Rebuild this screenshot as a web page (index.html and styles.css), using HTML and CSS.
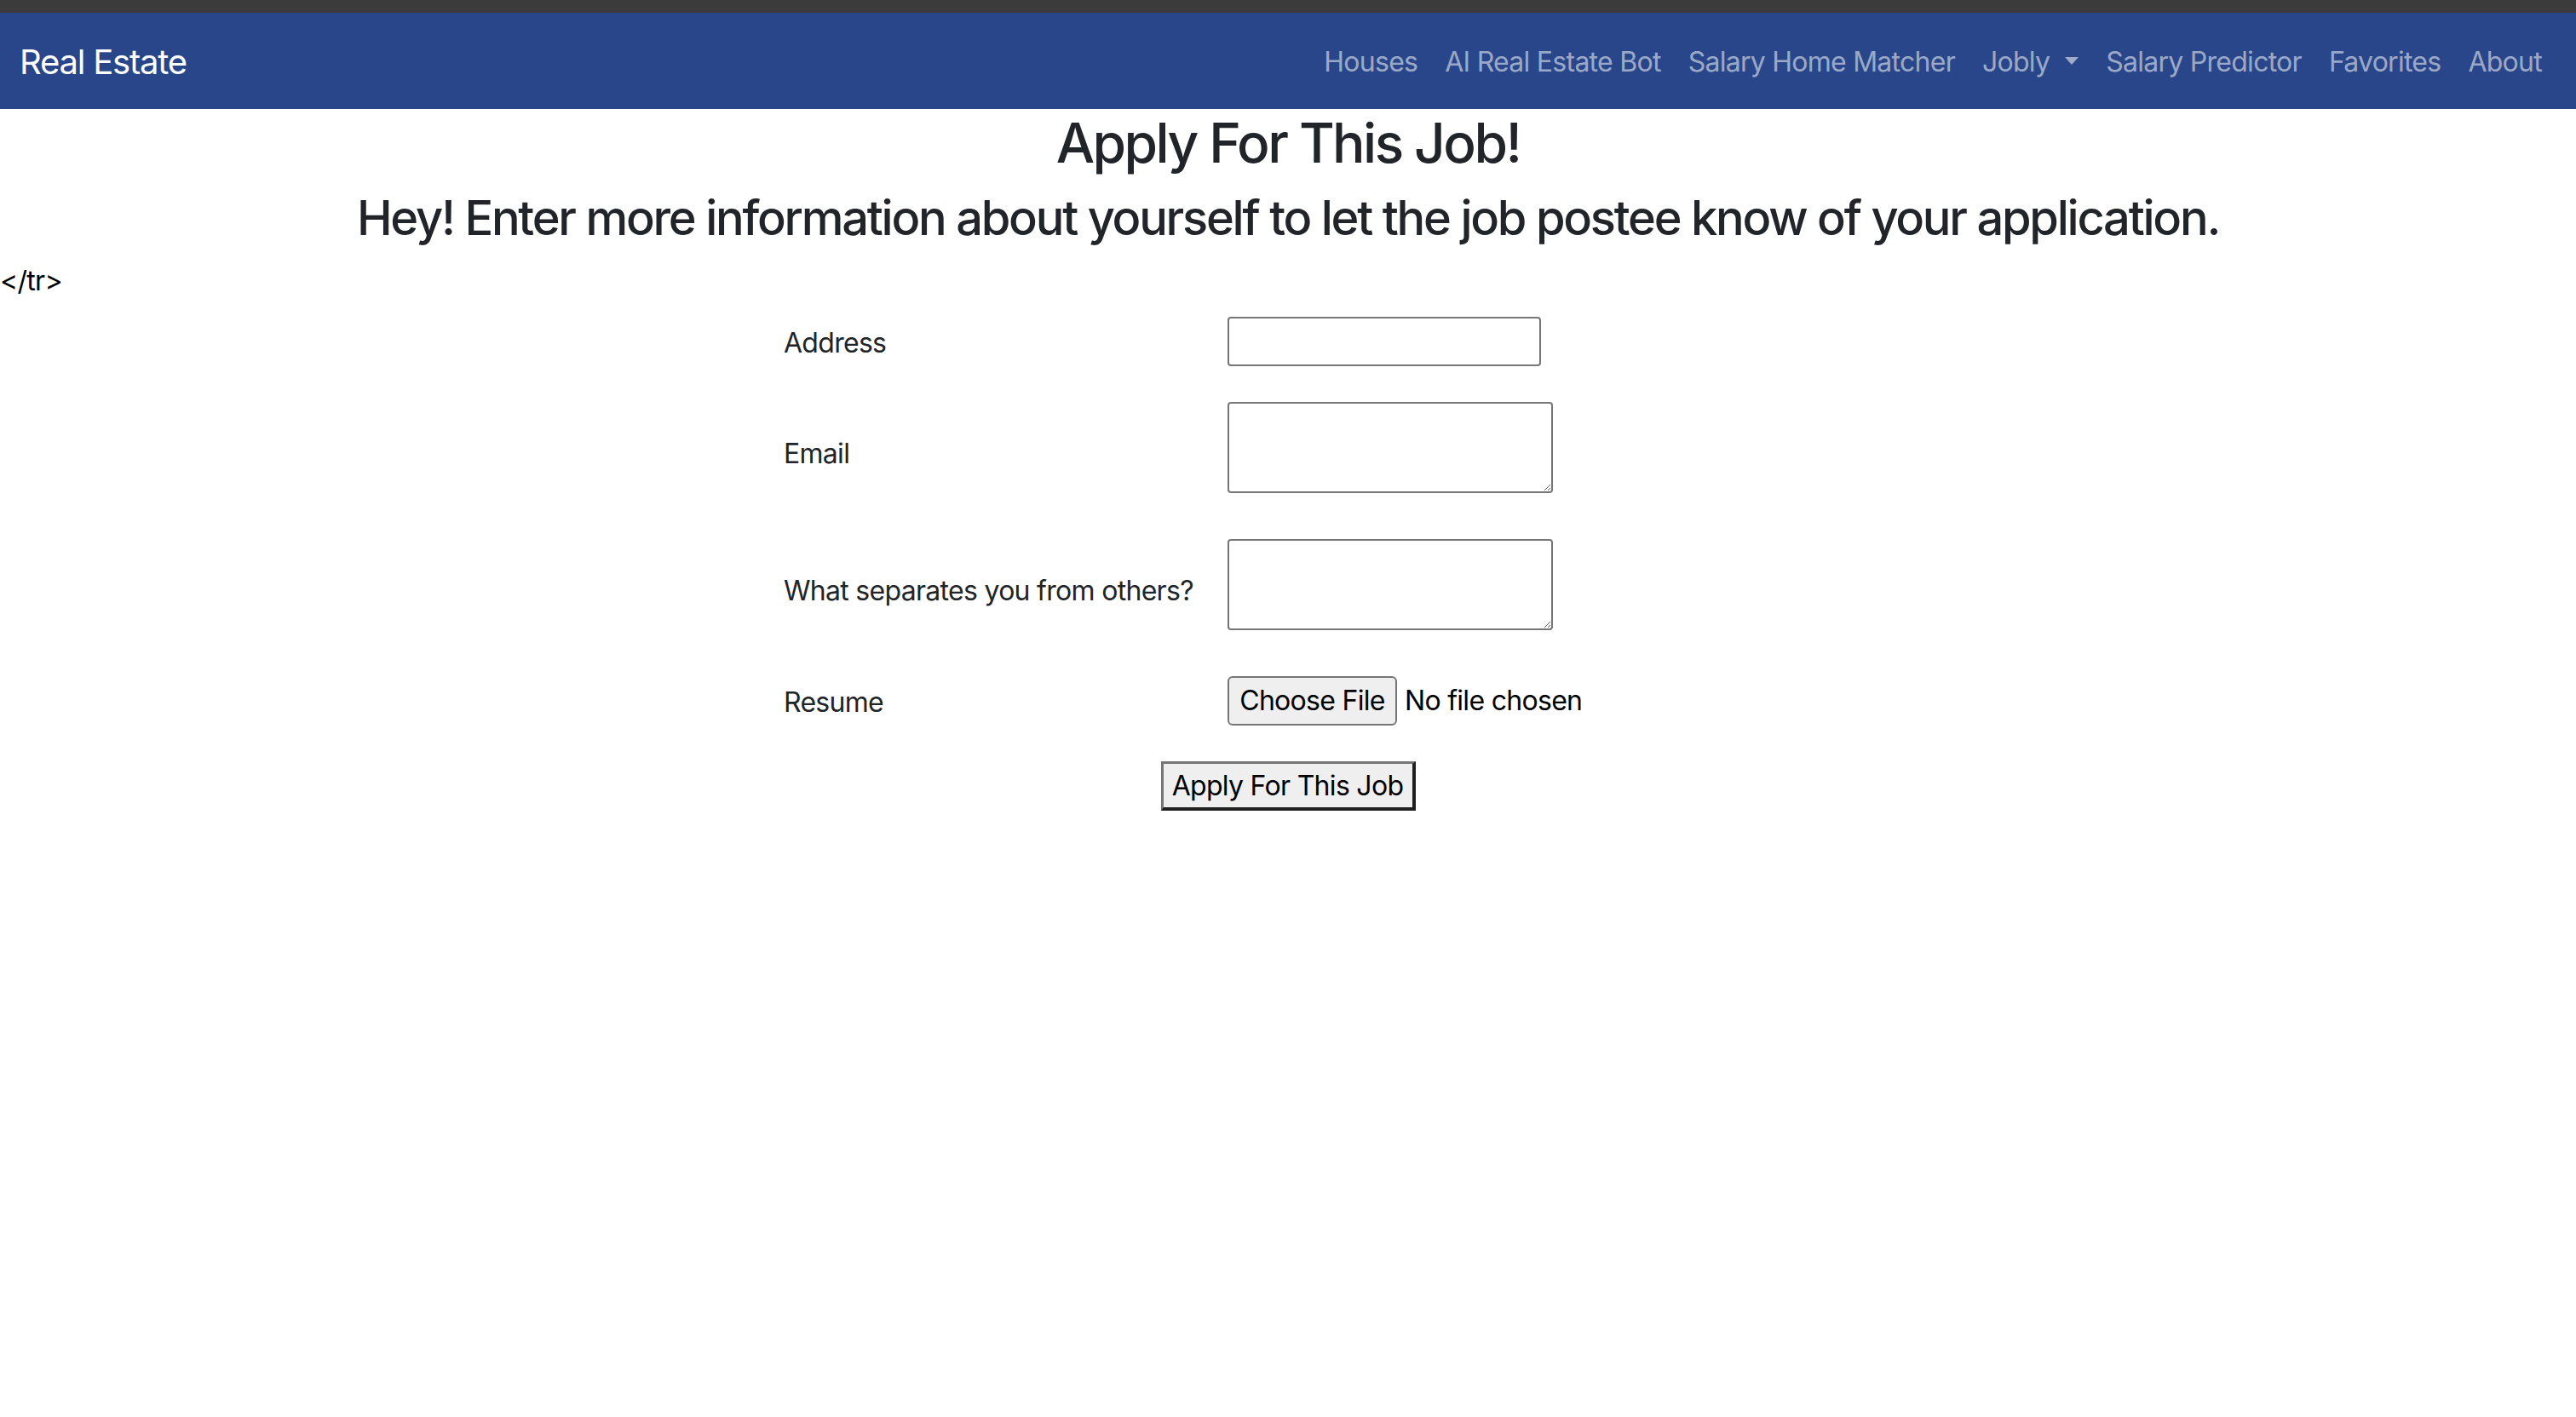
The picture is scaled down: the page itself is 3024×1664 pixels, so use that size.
FILE: index.html
```html
<!DOCTYPE html>
<html lang="en">
<head>
<meta charset="utf-8">
<title>Apply For This Job</title>
<link rel="stylesheet" href="styles.css">
</head>
<body>
<div class="topband"></div>
<nav class="navbar">
  <a class="brand" href="#">Real Estate</a>
  <ul class="nav">
    <li><a class="nav-link" href="#">Houses</a></li>
    <li><a class="nav-link" href="#">AI Real Estate Bot</a></li>
    <li><a class="nav-link" href="#">Salary Home Matcher</a></li>
    <li><a class="nav-link dropdown" href="#">Jobly</a></li>
    <li><a class="nav-link" href="#">Salary Predictor</a></li>
    <li><a class="nav-link" href="#">Favorites</a></li>
    <li><a class="nav-link" href="#">About</a></li>
  </ul>
</nav>
<h2 class="title">Apply For This Job!</h2>
<h3 class="subtitle">Hey! Enter more information about yourself to let the job postee know of your application.</h3>
<div class="stray">&lt;/tr&gt;</div>
<form class="apply-form">
  <div class="grid">
    <label class="label" for="address">Address</label>
    <div class="cell"><input id="address" class="text-input" type="text"></div>
    <label class="label" for="email">Email</label>
    <div class="cell tall"><textarea id="email" class="area"></textarea></div>
    <label class="label" for="sep">What separates you from others?</label>
    <div class="cell tall"><textarea id="sep" class="area"></textarea></div>
    <label class="label" for="resume">Resume</label>
    <div class="cell file-cell"><span class="file-btn">Choose File</span><span class="file-text">No file chosen</span></div>
  </div>
  <div class="submit-row"><button type="button" class="submit">Apply For This Job</button></div>
</form>
</body>
</html>
```
FILE: styles.css
```css
html, body {
  margin: 0;
  padding: 0;
  background: #fff;
}
body {
  font-family: Inter, "Liberation Sans", sans-serif;
  font-size: 32px;
  line-height: 48px;
  letter-spacing: -0.022em;
  color: #212529;
}
.topband {
  height: 15px;
  background: #3b3b3b;
}
.navbar {
  box-sizing: border-box;
  height: 113px;
  background: #284689;
  display: flex;
  align-items: center;
  padding: 3px 24px 0 23px;
}
.brand {
  color: #fff;
  font-size: 40px;
  line-height: 60px;
  letter-spacing: -0.03em;
  text-decoration: none;
}
.nav {
  list-style: none;
  margin: 0 0 0 auto;
  padding: 0;
  display: flex;
}
.nav-link {
  display: block;
  padding: 0 16px;
  color: rgba(255, 255, 255, 0.55);
  text-decoration: none;
  font-size: 32px;
  line-height: 48px;
  letter-spacing: -0.023em;
}
.dropdown::after {
  content: "";
  display: inline-block;
  margin-left: 18px;
  vertical-align: 8px;
  border-top: 9px solid;
  border-left: 8px solid transparent;
  border-right: 8px solid transparent;
}
.title {
  margin: 1px 0 0;
  text-align: center;
  font-size: 64px;
  line-height: 77px;
  font-weight: 500;
  letter-spacing: -0.04em;
}
.subtitle {
  margin: 17px 0 0;
  text-align: center;
  font-size: 56px;
  line-height: 67px;
  font-weight: 500;
  letter-spacing: -0.04em;
}
.stray {
  margin-top: 16px;
  color: #000;
}
.apply-form {
  margin-top: 18px;
}
.grid {
  width: 1184px;
  margin: 0 auto;
  display: grid;
  grid-template-columns: 521px 1fr;
  row-gap: 42px;
  align-items: center;
}
.tall {
  padding-bottom: 12px;
}
.label {
  display: block;
  padding-top: 3px;
}
.cell {
  display: flex;
  align-items: center;
}
.text-input {
  box-sizing: border-box;
  width: 368px;
  height: 58px;
  border: 2px solid #767676;
  border-radius: 4px;
  margin: 0;
  padding: 2px 4px;
  font: inherit;
}
.area {
  box-sizing: border-box;
  width: 382px;
  height: 107px;
  border: 2px solid #767676;
  border-radius: 4px;
  margin: 0;
  padding: 4px;
  font: inherit;
  display: block;
}
.file-btn {
  box-sizing: border-box;
  height: 58px;
  width: 199px;
  display: flex;
  align-items: center;
  justify-content: center;
  background: #efefef;
  border: 2px solid #767676;
  border-radius: 6px;
  color: #000;
}
.file-text {
  margin-left: 9px;
  color: #000;
}
.submit-row {
  margin-top: 42px;
  display: flex;
  justify-content: center;
}
.submit {
  box-sizing: border-box;
  width: 299px;
  height: 58px;
  margin: 0;
  padding: 0;
  background: #efefef;
  border-style: solid;
  border-width: 3px 4px 4px 3px;
  border-color: #767676 #1f1f1f #1f1f1f #767676;
  font: inherit;
  letter-spacing: inherit;
  line-height: 1;
  color: #000;
}
```
